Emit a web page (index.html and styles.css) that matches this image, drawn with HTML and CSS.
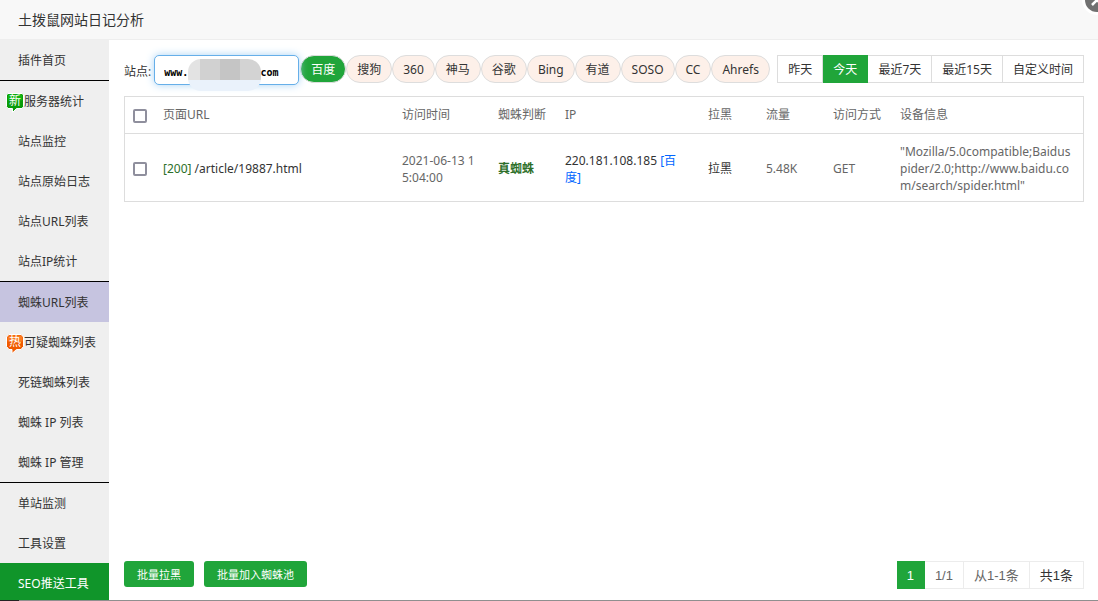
FILE: index.html
```html
<!DOCTYPE html>
<html lang="zh-CN">
<head>
<meta charset="utf-8">
<title>土拨鼠网站日记分析</title>
<link rel="stylesheet" href="styles.css">
</head>
<body>
<div class="window">
  <header class="titlebar">
    <h1 class="title">土拨鼠网站日记分析</h1>
    <button class="close" type="button" aria-label="关闭">
      <svg viewBox="0 0 30 30" width="30" height="30"><circle cx="15" cy="15" r="15" fill="#fff"/><circle cx="15" cy="15" r="12" fill="#707070"/><path d="M10 10l10 10M20 10L10 20" stroke="#fff" stroke-width="2.5"/></svg>
    </button>
  </header>
  <div class="body">
    <nav class="sidebar">
      <a class="item" href="#">插件首页</a>
      <a class="item ruled" href="#"><svg class="badge" viewBox="0 0 18 20" width="18" height="20"><path d="M2 .5h14l1.500 1.500v11.500L16 15.500h-5.500L6.500 19.500V15.500H2L.5 13.500V2z" fill="#0a9c0a" stroke="#fff"/><path d="M2 1.500h14v6H2z" fill="#12b412"/><text x="9" y="12" text-anchor="middle">新</text></svg>服务器统计</a>
      <a class="item" href="#">站点监控</a>
      <a class="item" href="#">站点原始日志</a>
      <a class="item" href="#">站点URL列表</a>
      <a class="item" href="#">站点IP统计</a>
      <a class="item ruled active" href="#">蜘蛛URL列表</a>
      <a class="item" href="#"><svg class="badge" viewBox="0 0 18 20" width="18" height="20"><path d="M3 .5h12l2.500 2.500v9.500L15 15.500h-4.500L6 19.500V15.500H3L.5 12.500V3z" fill="#f05a00" stroke="#fff"/><path d="M3 1.500h12l1.500 2v4h-15v-4z" fill="#f97a22"/><text x="9" y="12" text-anchor="middle">热</text></svg>可疑蜘蛛列表</a>
      <a class="item" href="#">死链蜘蛛列表</a>
      <a class="item" href="#">蜘蛛 IP 列表</a>
      <a class="item" href="#">蜘蛛 IP 管理</a>
      <a class="item ruled" href="#">单站监测</a>
      <a class="item" href="#">工具设置</a>
      <a class="item push" href="#">SEO推送工具</a>
    </nav>
    <main class="content">
      <div class="filters">
        <label class="site-label" for="site">站点:</label>
        <div class="site">
          <input class="site-input" id="site" type="text" value="www.&nbsp;&nbsp;&nbsp;&nbsp;&nbsp;&nbsp;&nbsp;&nbsp;&nbsp;&nbsp;&nbsp;&nbsp;com">
          <span class="mask"></span>
        </div>
        <div class="spiders">
          <button class="pill on" type="button">百度</button>
          <button class="pill" type="button">搜狗</button>
          <button class="pill" type="button">360</button>
          <button class="pill" type="button">神马</button>
          <button class="pill" type="button">谷歌</button>
          <button class="pill" type="button">Bing</button>
          <button class="pill" type="button">有道</button>
          <button class="pill" type="button">SOSO</button>
          <button class="pill" type="button">CC</button>
          <button class="pill" type="button">Ahrefs</button>
        </div>
        <div class="dates">
          <button class="date" type="button">昨天</button>
          <button class="date on" type="button">今天</button>
          <button class="date" type="button">最近7天</button>
          <button class="date" type="button">最近15天</button>
          <button class="date" type="button">自定义时间</button>
        </div>
      </div>
      <table class="log">
        <colgroup><col class="c-check"><col class="c-url"><col class="c-time"><col class="c-judge"><col class="c-ip"><col class="c-block"><col class="c-flow"><col class="c-method"><col class="c-agent"></colgroup>
        <thead>
          <tr><th><input class="check" type="checkbox" aria-label="全选"></th><th>页面URL</th><th>访问时间</th><th>蜘蛛判断</th><th>IP</th><th>拉黑</th><th>流量</th><th>访问方式</th><th>设备信息</th></tr>
        </thead>
        <tbody>
          <tr>
            <td><input class="check" type="checkbox" aria-label="选择此行"></td>
            <td><a class="link" href="#"><span class="ok">[200]</span> /article/19887.html</a></td>
            <td>2021-06-13 15:04:00</td>
            <td><b class="ok">真蜘蛛</b></td>
            <td><a class="link" href="#">220.181.108.185</a> <a class="blue" href="#">[百度]</a></td>
            <td><a class="link" href="#">拉黑</a></td>
            <td>5.48K</td>
            <td>GET</td>
            <td>"Mozilla/5.0compatible;Baiduspider/2.0;http://www.baidu.com/search/spider.html"</td>
          </tr>
        </tbody>
      </table>
      <div class="bottom">
        <div class="actions">
          <button class="action" type="button">批量拉黑</button>
          <button class="action" type="button">批量加入蜘蛛池</button>
        </div>
        <div class="pager">
          <span class="page on">1</span><span class="page">1/1</span><span class="page">从1-1条</span><span class="page total">共1条</span>
        </div>
      </div>
    </main>
  </div>
  <div class="edge"></div>
</div>
</body>
</html>
```
FILE: styles.css
```css
* { box-sizing: border-box; }

body {
  margin: 0;
  color: #333;
  background: #fff;
  font: 12px/17px "Noto Sans", "Noto Sans CJK SC", sans-serif;
}

button, input { font: inherit; color: inherit; margin: 0; }
a { color: inherit; text-decoration: none; }

.window {
  display: flex;
  flex-direction: column;
  height: 100vh;
  overflow: hidden;
  position: relative;
}

.titlebar {
  flex: none;
  height: 40px;
  padding: 0 18px;
  background: #f8f8f8;
  border-bottom: 1px solid #eee;
}
.title { margin: 0; font-size: 14px; font-weight: 400; line-height: 40px; }
.close {
  position: absolute;
  top: -15px;
  right: -14px;
  padding: 0;
  border: 0;
  background: none;
}
.close svg { display: block; }

.body { flex: 1; min-height: 0; display: flex; }

.sidebar { flex: none; width: 109px; background: #efefef; overflow: hidden; }
.item { display: block; position: relative; padding: 2px 0 0 18px; line-height: 38px; white-space: nowrap; }
.item.ruled { border-top: 1px solid #000; }
.item.active { background: #c6c4e0; }
.item.push { background: #10952a; color: #fff; }
.item:has(.badge) { padding-left: 24px; }
.badge { position: absolute; left: 6px; top: 12px; }
.badge text { font-size: 12px; fill: #fff; }

.content {
  flex: 1;
  min-width: 0;
  display: flex;
  flex-direction: column;
  padding: 15px 14px 11px 15px;
}

.filters { display: flex; align-items: flex-start; }
.site-label { line-height: 34px; margin-right: 3px; }
.site { position: relative; flex: none; width: 145px; margin-right: 1px; }
.site-input {
  display: block;
  width: 100%;
  height: 30px;
  padding: 4px 9px 0;
  border: 1px solid #66afe9;
  border-radius: 5px;
  outline: 0;
  background: #fff;
  box-shadow: 0 0 8px #a9d3f5;
  color: #000;
  font: bold 10px "DejaVu Sans Mono", monospace;
}
.mask {
  position: absolute;
  left: 34px;
  top: 4px;
  width: 73px;
  height: 32px;
  border-radius: 13px;
  background:
    linear-gradient(90deg, #e3e3e3 12px, #d1d1d1 12px 32px, #c5c5c5 32px 52px, #d3d3d3 52px) 0 0 / 100% 21px no-repeat,
    #eaf2fb;
}
.spiders { display: flex; }
.pill {
  height: 28px;
  padding: 0 10px;
  border: 1px solid #ddd;
  border-radius: 14px;
  background: #fdf0e9;
  white-space: nowrap;
}
.pill.on { background: #20a53a; color: #fff; }
.dates { display: flex; margin-left: auto; }
.date {
  height: 28px;
  padding: 0 10px;
  border: 1px solid #ddd;
  border-left-width: 0;
  background: #fff;
  white-space: nowrap;
}
.date:first-child { border-left-width: 1px; }
.date.on { background: #20a53a; border-color: #20a53a; color: #fff; }

.log {
  width: 100%;
  margin-top: 7px;
  table-layout: fixed;
  border-collapse: separate;
  border-spacing: 0;
  border: 1px solid #ddd;
  color: #666;
}
.log th, .log td { padding: 8px; text-align: left; font-weight: 400; word-break: break-all; }
.log th { height: 36px; padding-bottom: 10px; }
.log th:first-child { padding-bottom: 6px; }
.log td { height: 68px; padding-top: 9px; padding-bottom: 7px; border-top: 1px solid #ddd; }
.c-check { width: 30px; }
.c-url { width: 239px; }
.c-time { width: 96px; }
.c-judge, .c-flow { width: 67px; }
.c-ip { width: 143px; }
.c-block { width: 58px; }
.c-method { width: 67px; }
.check {
  display: block;
  appearance: none;
  width: 14px;
  height: 14px;
  border: 2px solid #8f8f9d;
  border-radius: 2px;
  background: #fff;
}
.link { color: #333; }
.ok { color: #2d6f2a; }
.blue { color: #06f; }

.bottom { display: flex; justify-content: space-between; align-items: flex-start; margin-top: auto; }
.actions { display: flex; gap: 10px; }
.action {
  height: 26px;
  padding: 0 13px;
  border: 0;
  border-radius: 3px;
  background: #20a53a;
  color: #fff;
  font-size: 11px;
}
.pager { display: flex; font: 13px/24px "Liberation Sans", "Noto Sans CJK SC", sans-serif; }
.page { padding: 2px 10px 0; border: 1px solid #ececec; border-left: 0; color: #666; }
.page.on { background: #20a53a; border-color: #20a53a; color: #fff; }
.page.total { color: #333; }

.edge { flex: none; height: 1px; background: linear-gradient(90deg, #222 19px, #8f8f8f 19px); }
```
